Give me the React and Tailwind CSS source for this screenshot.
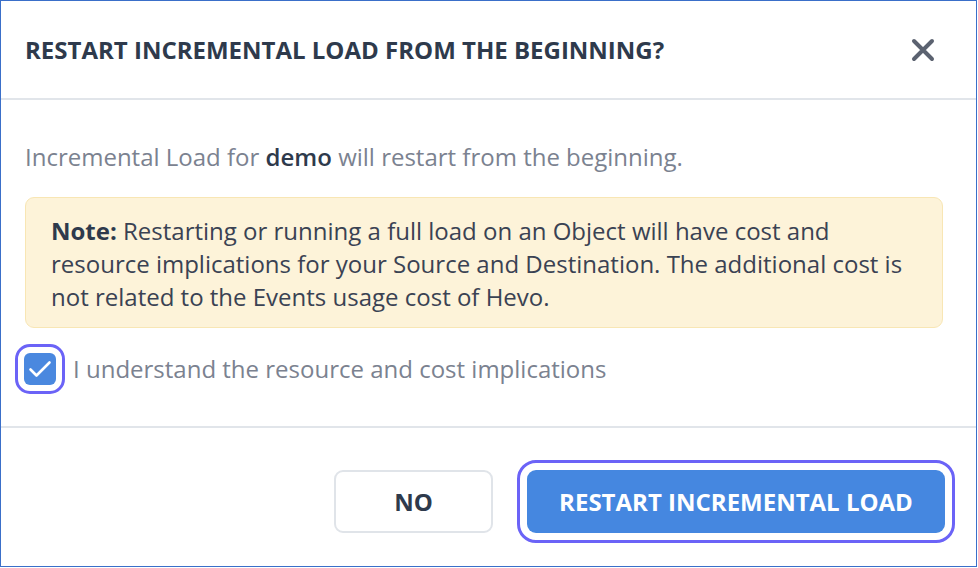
import React from 'react'

export default function App() {
  return (
    <div className="w-[977px] h-[567px] border border-[#3a6fc9] bg-white font-['Open_Sans',sans-serif] flex flex-col">
      {/* Header */}
      <div className="h-[99px] shrink-0 flex items-center justify-between pl-[24px] pr-[41px] border-b-2 border-[#e1e5ea]">
        <h2 className="text-[24px] font-bold text-[#2e3a4c]">
          RESTART INCREMENTAL LOAD FROM THE BEGINNING?
        </h2>
        <button className="w-[24px] h-[24px] flex items-center justify-center">
          <svg width="24" height="24" viewBox="0 0 24 24">
            <path d="M3 3 L21 21 M21 3 L3 21" stroke="#5b6270" strokeWidth="4" strokeLinecap="round" />
          </svg>
        </button>
      </div>

      {/* Body */}
      <div className="pl-[24px] pr-[33px] pt-[41px] pb-[31px]">
        <p className="text-[24px] leading-[32px] text-[#7b8290]">
          Incremental Load for <span className="font-semibold text-[#2e3a4c]">demo</span> will restart from the beginning.
        </p>
        <div className="mt-[24px] rounded-[9px] border border-[#f8e6b4] bg-[#fdf3d9] pl-[25px] pr-[20px] pt-[16px] pb-[14px] text-[24px] leading-[33px] text-[#3a4253]">
          <span className="font-bold text-[#2e3a4c]">Note:</span> Restarting or running a full load on an Object will have cost and resource implications for your Source and Destination. The additional cost is not related to the Events usage cost of Hevo.
        </div>
        <label className="mt-[25px] flex items-center gap-[17px] -ml-[1px]">
          <span className="w-[32px] h-[32px] rounded-[6px] bg-[#4a88df] flex items-center justify-center outline-[3px] outline-offset-[6px] outline-[#6b63f7]">
            <svg width="26" height="26" viewBox="0 0 26 26" fill="none">
              <path d="M3.5 13.5 L9.5 19.5 L22.5 6.5" stroke="white" strokeWidth="2.6" strokeLinecap="round" strokeLinejoin="round" />
            </svg>
          </span>
          <span className="text-[24px] leading-[32px] text-[#7b8290]">I understand the resource and cost implications</span>
        </label>
      </div>

      {/* Footer */}
      <div className="mt-[10px] border-t-2 border-[#e1e5ea] flex justify-end items-start gap-[34px] pr-[31px] pt-[42px]">
        <button className="w-[159px] h-[63px] rounded-[9px] border-2 border-[#e0e4e9] bg-white text-[24px] font-bold text-[#2e3a4c]">
          NO
        </button>
        <button className="w-[418px] h-[63px] rounded-[9px] bg-[#4587e0] text-[24px] font-bold text-white outline-[3px] outline-offset-[7px] outline-[#6b63f7]">
          RESTART INCREMENTAL LOAD
        </button>
      </div>
    </div>
  )
}
